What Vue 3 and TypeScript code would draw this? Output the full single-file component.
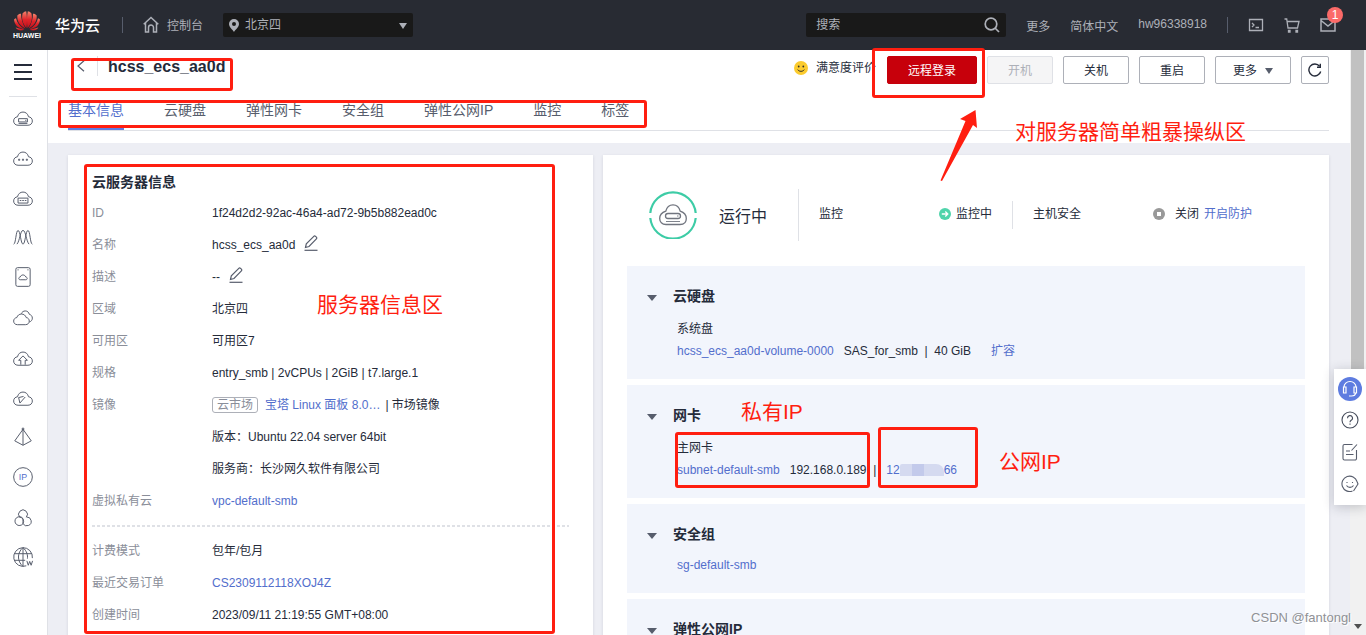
<script setup lang="ts">
interface NavItem {
  label: string
  paths: string[]
  text?: string
}

interface InfoRow {
  label: string
  value: string
  link?: boolean
  editable?: boolean
  market?: boolean
}

const cloud = 'M5.5 17.5C2.8 17.5 1.5 15.6 1.5 13.6C1.5 11.4 3 10 5 9.8C5.6 7 7.6 5.5 10 5.5C12.4 5.5 14.4 7 15 9.8C17 10 18.5 11.4 18.5 13.6C18.5 15.6 17.2 17.5 14.5 17.5Z'

const navItems: NavItem[] = [
  { label: '云耀服务器', paths: [cloud, 'M6 11.5h8v3H6zM12 13h1M6 15.8h8'] },
  { label: '云容器', paths: [cloud, 'M6 12h1v1H6zM9.5 12h1v1h-1zM13 12h1v1h-1z'] },
  { label: '云主机', paths: [cloud, 'M5.5 11h9v4.5h-9zM7 13.2h1.5M9.3 13.2h1.5M11.6 13.2h1.5'] },
  { label: '弹性伸缩', paths: ['M1.5 16.5C3.5 16.5 3.5 4 5.5 4S8 16.5 10 16.5S12.5 4 14.5 4S16.5 16.5 18.5 16.5', 'M4.5 16.5C7 14 7.5 4 10 4S13 14 15.5 16.5'] },
  { label: '镜像服务', paths: ['M5 1.5h10a1.5 1.5 0 0 1 1.5 1.5v14a1.5 1.5 0 0 1-1.5 1.5H5a1.5 1.5 0 0 1-1.5-1.5V3A1.5 1.5 0 0 1 5 1.5z', 'M7.5 12.5c-2 0-1.500-2.5 0-2.5c.7-2.5 4.3-2.5 5 0c1.5 0 2 2.5 0 2.5zM5 3.5h1M14 3.5h1'] },
  { label: '多云', paths: ['M5 17C2.6 17 1.5 15.4 1.5 13.7C1.5 12 2.7 10.7 4.4 10.5C5 8.5 6.6 7.3 8.6 7.3C10.7 7.3 12.3 8.5 12.9 10.5C14.6 10.7 15.7 12 15.7 13.7C15.7 15.4 14.5 17 12.2 17Z', 'M8.5 7C9 5.5 10.4 4.5 12 4.5C14 4.5 15.3 5.7 15.7 7.5C17.3 8 18.5 9.2 18.5 11C18.5 12.8 17.5 14 15.8 14.5'] },
  { label: '云备份', paths: [cloud, 'M8 17v-4H6l4-4l4 4h-2v4'] },
  { label: '云监控', paths: [cloud, 'M10.5 9.5L6 10.5M6 10.5L7.2 15.5L12 10'] },
  { label: '对象存储', paths: ['M10 3L2.5 13.5L10 17.5L17.5 13.5ZM10 3V17.5', 'M9.3 2h1.4v1.4H9.3z'] },
  { label: '弹性公网IP', paths: ['M10 1.5a8.5 8.5 0 1 0 0 17a8.5 8.5 0 1 0 0-17z'], text: 'IP' },
  { label: '资源组', paths: ['M7 10.2A4 4 0 1 1 13 10.2', 'M10 11.5A4 4 0 1 0 10 16A4 4 0 1 0 13.3 10M6.7 10A4 4 0 0 1 10 16M10 11.5V16'] },
  { label: '域名', paths: ['M13 18A8.500 8.500 0 1 1 18.5 11M10 1.5v17M2 7h16M2 13h10M10 1.5C4.5 6 4.5 14 10 18.5M10 1.5c3.5 3 4.5 7 4 10', 'M13.500 13.500l1.300 4l1.300-3.500l1.300 3.500l1.300-4'] },
]

const tabs: string[] = ['基本信息', '云硬盘', '弹性网卡', '安全组', '弹性公网IP', '监控', '标签']

const baseRows: InfoRow[] = [
  { label: 'ID', value: '1f24d2d2-92ac-46a4-ad72-9b5b882ead0c' },
  { label: '名称', value: 'hcss_ecs_aa0d', editable: true },
  { label: '描述', value: '--', editable: true },
  { label: '区域', value: '北京四' },
  { label: '可用区', value: '可用区7' },
  { label: '规格', value: 'entry_smb | 2vCPUs | 2GiB | t7.large.1' },
  { label: '镜像', value: '宝塔 Linux 面板 8.0…', market: true },
  { label: '', value: '版本：Ubuntu 22.04 server 64bit' },
  { label: '', value: '服务商：长沙网久软件有限公司' },
  { label: '虚拟私有云', value: 'vpc-default-smb', link: true },
]

const billingRows: InfoRow[] = [
  { label: '计费模式', value: '包年/包月' },
  { label: '最近交易订单', value: 'CS2309112118XOJ4Z', link: true },
  { label: '创建时间', value: '2023/09/11 21:19:55 GMT+08:00' },
]
</script>

<template>
  <div class="page">
    <header class="topbar">
      <a class="brand" href="#" aria-label="HUAWEI 华为云">
        <span class="logo">
          <svg width="28" height="20" viewBox="0 0 28 20" aria-hidden="true">
            <defs>
              <linearGradient id="petal" x1="0" y1="0" x2="0" y2="1">
                <stop offset="0" stop-color="#f4836c" />
                <stop offset="0.5" stop-color="#e0242a" />
                <stop offset="1" stop-color="#c4121c" />
              </linearGradient>
            </defs>
            <g fill="url(#petal)">
              <path d="M13.5 17C9 12 8.5 7 9.6 2.5C10.8 .9 12 .4 13.2 .3C14.2 5 14.3 11 13.5 17Z" />
              <path d="M14.5 17C19 12 19.5 7 18.4 2.5C17.2 .9 16 .4 14.8 .3C13.8 5 13.7 11 14.5 17Z" />
              <path d="M12.5 17.5C6.5 14.5 4 10 4.3 4.5C5.5 3.2 6.7 2.8 8 2.8C8 8 9.5 13 12.5 17.5Z" />
              <path d="M15.5 17.5C21.5 14.5 24 10 23.7 4.5C22.5 3.2 21.3 2.8 20 2.8C20 8 18.5 13 15.5 17.5Z" />
              <path d="M11.5 18C5 17.5 1.5 14 1 8.5C1.5 7.8 2.3 7.4 3 7.2C4 12 7 15.5 11.5 18Z" />
              <path d="M16.5 18C23 17.5 26.5 14 27 8.5C26.5 7.8 25.7 7.4 25 7.2C24 12 21 15.5 16.5 18Z" />
              <path d="M11.5 18.7C8 20.2 4.5 19.8 2.6 16.6C5.5 17.6 8.5 18.5 11.5 18.7Z" />
              <path d="M16.5 18.7C20 20.2 23.5 19.8 25.4 16.6C22.5 17.6 19.5 18.5 16.5 18.7Z" />
            </g>
          </svg>
          <span class="logo-text">HUAWEI</span>
        </span>
        <span class="brand-name">华为云</span>
      </a>
      <span class="bar-line"></span>
      <a class="console" href="#">
        <svg width="16" height="18" viewBox="0 0 16 18" fill="none" stroke="#adb0b8" stroke-width="1.5" aria-hidden="true">
          <path d="M.7 8.3L8 1.5l7.3 6.8M2.5 7v9h3v-4.500a2.5 2.5 0 0 1 5 0V16h3V7" />
        </svg>
        <span>控制台</span>
      </a>
      <div class="region">
        <svg class="pin" width="10" height="13" viewBox="0 0 10 13" aria-hidden="true">
          <path fill="#adb0b8" fill-rule="evenodd" d="M5 0a5 5 0 0 1 5 5c0 3-3.500 5.500-5 8C3.500 10.500 0 8 0 5a5 5 0 0 1 5-5zm0 3a2 2 0 1 0 0 4a2 2 0 1 0 0-4z" />
        </svg>
        <select aria-label="区域">
          <option>北京四</option>
        </select>
        <svg class="caret" width="8" height="6" viewBox="0 0 8 6" aria-hidden="true"><path fill="#adb0b8" d="M0 0h8L4 6z" /></svg>
      </div>
      <div class="search">
        <input type="text" placeholder="搜索" aria-label="搜索" />
        <svg width="16" height="16" viewBox="0 0 16 16" fill="none" stroke="#adb0b8" stroke-width="1.7" aria-hidden="true">
          <circle cx="7" cy="7" r="5.8" /><path d="M11 11l4 4" />
        </svg>
      </div>
      <nav class="links" aria-label="账号">
        <a href="#">更多</a>
        <a href="#">简体中文</a>
        <a href="#">hw96338918</a>
      </nav>
      <span class="bar-line"></span>
      <div class="tools">
        <button type="button" aria-label="终端">
          <svg width="16" height="16" viewBox="0 0 16 16" fill="none" stroke="#adb0b8" stroke-width="1.3" aria-hidden="true">
            <path d="M1.5 2.5h13v11h-13zM4 6l2 2l-2 2M7.5 10.5H11" />
          </svg>
        </button>
        <button type="button" aria-label="购物车">
          <svg width="16" height="16" viewBox="0 0 16 16" fill="none" stroke="#adb0b8" stroke-width="1.3" aria-hidden="true">
            <path d="M.5 2h2.200l1.300 9h9.500l1.500-6.500H3.500" /><path d="M4.500 13.500H6V15H4.500zM12 13.500h1.500V15H12z" />
          </svg>
        </button>
        <button type="button" aria-label="消息">
          <svg width="16" height="16" viewBox="0 0 16 16" fill="none" stroke="#adb0b8" stroke-width="1.5" aria-hidden="true">
            <path d="M1 2h14v12H1zM1 3.5L8 9l7-5.5" />
          </svg>
          <span class="badge">1</span>
        </button>
      </div>
    </header>

    <div class="body">
      <nav class="side" aria-label="服务列表">
        <button type="button" class="menu" aria-label="菜单">
          <svg width="18" height="16" viewBox="0 0 18 16" aria-hidden="true"><path fill="#252b3a" d="M0 0h18v2H0zM0 7h18v2H0zM0 14h18v2H0z" /></svg>
        </button>
        <a v-for="item in navItems" :key="item.label" href="#" :aria-label="item.label">
          <svg width="22" height="22" viewBox="0 0 20 20" fill="none" stroke="#575d6c" stroke-width="0.9" aria-hidden="true">
            <path v-for="(d, i) in item.paths" :key="i" :d="d" />
            <text v-if="item.text" x="10" y="13" class="nav-glyph">{{ item.text }}</text>
          </svg>
        </a>
      </nav>

      <main class="main">
        <section class="head">
          <div class="title-row">
            <a class="back" href="#" aria-label="返回">
              <svg width="8" height="12" viewBox="0 0 8 12" fill="none" stroke="#575d6c" stroke-width="1.2" aria-hidden="true"><path d="M7 .7L1 6l6 5.3" /></svg>
            </a>
            <h1>hcss_ecs_aa0d</h1>
            <a class="rate" href="#">
              <svg width="14" height="14" viewBox="0 0 14 14" aria-hidden="true">
                <circle cx="7" cy="7" r="7" fill="#fbcb2e" />
                <ellipse cx="4.7" cy="5.5" rx="0.9" ry="1.1" fill="#33302a" /><ellipse cx="9.3" cy="5.5" rx="0.9" ry="1.1" fill="#33302a" />
                <path d="M3.7 8.6c1.4 2.3 5.200 2.3 6.600 0" fill="none" stroke="#33302a" stroke-width="1" />
              </svg>
              <span>满意度评价</span>
            </a>
            <div class="actions">
              <button type="button" class="btn primary">远程登录</button>
              <button type="button" class="btn" disabled>开机</button>
              <button type="button" class="btn">关机</button>
              <button type="button" class="btn">重启</button>
              <button type="button" class="btn more">
                更多
                <svg width="8" height="6" viewBox="0 0 8 6" aria-hidden="true"><path fill="#575d6c" d="M0 0h8L4 6z" /></svg>
              </button>
              <button type="button" class="btn icon" aria-label="刷新">
                <svg width="14" height="14" viewBox="0 0 14 14" fill="none" stroke="#252b3a" stroke-width="1.4" aria-hidden="true">
                  <path d="M12.7 8.5A6 6 0 1 1 11.6 3.2" /><path d="M12.3 .8v3.400H9" />
                </svg>
              </button>
            </div>
          </div>
          <nav class="tabs" aria-label="详情">
            <a v-for="(tab, i) in tabs" :key="tab" href="#" :class="{ active: i === 0 }">{{ tab }}</a>
          </nav>
        </section>

        <div class="cards">
          <section class="card info">
            <h2>云服务器信息</h2>
            <dl>
              <div v-for="(row, i) in baseRows" :key="i" class="row">
                <dt>{{ row.label }}</dt>
                <dd>
                  <template v-if="row.market">
                    <span class="tag">云市场</span>
                    <a href="#">{{ row.value }}</a>
                    <span class="after">| 市场镜像</span>
                  </template>
                  <a v-else-if="row.link" href="#">{{ row.value }}</a>
                  <template v-else>{{ row.value }}</template>
                  <button v-if="row.editable" type="button" class="edit" aria-label="编辑">
                    <svg width="16" height="16" viewBox="0 0 16 16" fill="none" stroke="#575d6c" stroke-width="1.2" aria-hidden="true">
                      <path d="M1.5 15.3h13" /><path d="M2.5 12.5l.8-3.600L10.8 1.3a1.2 1.2 0 0 1 1.7 0l.9.9a1.2 1.2 0 0 1 0 1.7L6 11.5z" />
                    </svg>
                  </button>
                </dd>
              </div>
            </dl>
            <hr />
            <dl>
              <div v-for="row in billingRows" :key="row.label" class="row">
                <dt>{{ row.label }}</dt>
                <dd>
                  <a v-if="row.link" href="#">{{ row.value }}</a>
                  <template v-else>{{ row.value }}</template>
                </dd>
              </div>
            </dl>
          </section>

          <section class="card state">
            <div class="status">
              <svg width="48" height="48" viewBox="0 0 48 48" fill="none" aria-hidden="true">
                <path d="M1.3 22A22.8 22.8 0 0 1 46.7 22M1.3 27A22.8 22.8 0 0 0 46.7 27" stroke="#3dcca6" stroke-width="2.2" />
                <g stroke="#71757f" stroke-width="1.3">
                  <path d="M17 33.5C13 33.5 10.7 31 10.7 27.5C10.7 24 13 21.5 16.8 20.2C17.8 16 20.5 13.8 24 13.8C27.5 13.8 30.2 16 31.2 20.2C35 21.5 37.3 24 37.3 27.5C37.3 31 35 33.5 31 33.5Z" />
                  <rect x="16.5" y="22.5" width="15" height="5" rx="2.5" /><path d="M28 25h1.5M17 30.5h14" stroke-width="0.9" />
                </g>
              </svg>
              <strong class="running">运行中</strong>
              <div class="cell tall">
                <span>监控</span>
                <span class="flag">
                  <svg width="12" height="12" viewBox="0 0 12 12" aria-hidden="true"><circle cx="6" cy="6" r="6" fill="#50d4ab" /><path d="M2.8 6h6M6.3 3.5L8.8 6L6.3 8.5" fill="none" stroke="#fff" stroke-width="1.3" /></svg>
                  监控中
                </span>
              </div>
              <div class="cell">
                <span>主机安全</span>
                <span class="flag wide">
                  <svg width="12" height="12" viewBox="0 0 12 12" aria-hidden="true"><circle cx="6" cy="6" r="6" fill="#999" /><rect x="4" y="4" width="4" height="4" fill="#fff" /></svg>
                  关闭 <a href="#">开启防护</a>
                </span>
              </div>
            </div>

            <section class="block">
              <h3>云硬盘</h3>
              <p>系统盘</p>
              <p class="items"><a href="#">hcss_ecs_aa0d-volume-0000</a><span>SAS_for_smb&nbsp; |&nbsp; 40 GiB</span><a class="expand" href="#">扩容</a></p>
            </section>
            <section class="block">
              <h3>网卡</h3>
              <p>主网卡</p>
              <p class="items"><a href="#">subnet-default-smb</a><span>192.168.0.189&nbsp; |</span><a class="public" href="#">12<i class="mask"></i>66</a></p>
            </section>
            <section class="block compact">
              <h3>安全组</h3>
              <p><a href="#">sg-default-smb</a></p>
            </section>
            <section class="block">
              <h3>弹性公网IP</h3>
              <p>&nbsp;</p>
            </section>
          </section>
        </div>
      </main>

      <div class="scroll">
        <span class="thumb"></span>
        <svg width="8" height="5" viewBox="0 0 8 5" aria-hidden="true"><path fill="#505050" d="M0 0h8L4 5z" /></svg>
      </div>
    </div>

    <aside class="dock">
      <button type="button" class="service" aria-label="客服">
        <svg width="24" height="24" viewBox="0 0 24 24" fill="none" stroke="#fff" stroke-width="1.2" aria-hidden="true">
          <path d="M6 10a6 5.5 0 0 1 12 0M5.500 10H8v6H5.500zM16 10h2.500v6H16zM17.500 16c0 2-2 3-4 3h-2.500" />
        </svg>
      </button>
      <button type="button" aria-label="帮助">
        <svg width="18" height="18" viewBox="0 0 18 18" fill="none" stroke="#464c5b" stroke-width="1.1" aria-hidden="true">
          <circle cx="9" cy="9" r="8" /><path d="M6.5 7.2a2.5 2.5 0 1 1 3.7 2.1c-.9.5-1.200 1-1.200 2M9 12.5v1.3" />
        </svg>
      </button>
      <button type="button" aria-label="反馈">
        <svg width="18" height="18" viewBox="0 0 18 18" fill="none" stroke="#575d6c" stroke-width="1.1" aria-hidden="true">
          <path d="M11.5 1.5h-8a1.500 1.500 0 0 0-1.500 1.500v12.500a1.500 1.500 0 0 0 1.500 1.500h10.500a1.500 1.500 0 0 0 1.500-1.500V7M16 1.5L10.500 7.5M5 8h4M5 11.5h7.500" />
        </svg>
      </button>
      <button type="button" aria-label="评价">
        <svg width="18" height="18" viewBox="0 0 18 18" fill="none" stroke="#575d6c" stroke-width="1.1" aria-hidden="true">
          <path d="M11.5 16A7.7 7.7 0 1 1 16 6.5M16 6.5l1 2.5L12.5 16M5.5 10.5c1.5 2.5 5.5 2.5 7 0M6 7v1M11.5 7v1" />
        </svg>
      </button>
    </aside>

    <div class="notes">
      <span class="box box-title"></span>
      <span class="box box-tabs"></span>
      <span class="box box-login"></span>
      <span class="box box-info"></span>
      <span class="box box-private"></span>
      <span class="box box-public"></span>
      <svg class="arrow" width="38" height="72" viewBox="0 0 38 72" aria-hidden="true">
        <path fill="#ff1e10" d="M35.5 0L37 18L33 15L2 71L.5 70.5L25.500 11L20 9Z" />
      </svg>
      <span class="note note-ops">对服务器简单粗暴操纵区</span>
      <span class="note note-info">服务器信息区</span>
      <span class="note note-private">私有IP</span>
      <span class="note note-public">公网IP</span>
    </div>
    <span class="watermark">CSDN @fantongl</span>
  </div>
</template>

<style>
body {
  margin: 0;
  overflow: hidden;
}
</style>

<style scoped>
.page {
  position: relative;
  display: flex;
  flex-direction: column;
  height: 100vh;
  overflow: hidden;
  font-family: "Liberation Sans", "Noto Sans CJK SC", sans-serif;
  font-size: 12px;
  color: #252b3a;
  background: #edeef4;
}
a {
  color: #526ecc;
  text-decoration: none;
}
button,
input,
select {
  font: inherit;
}
svg {
  flex: none;
  display: block;
}
h1,
h2,
h3,
p,
dl,
dd {
  margin: 0;
}

.topbar {
  flex: none;
  display: flex;
  align-items: center;
  height: 50px;
  color: #adb0b8;
  background: #282b33;
}
.topbar a {
  color: #adb0b8;
}
.brand {
  display: flex;
  align-items: center;
  gap: 14px;
  margin-left: 13px;
}
.logo {
  display: flex;
  flex-direction: column;
  align-items: center;
  width: 28px;
}
.logo-text {
  font-size: 7px;
  line-height: 9px;
  font-weight: bold;
  color: #fff;
}
.brand-name {
  padding-bottom: 2px;
  font-size: 15px;
  font-weight: 500;
  color: #fff !important;
}
.bar-line {
  width: 1px;
  height: 16px;
  background: #575d6c;
}
.brand + .bar-line {
  margin: 0 20px 0 22px;
}
.console {
  display: flex;
  align-items: center;
  gap: 8px;
  margin-right: 20px;
}
.console span {
  padding-bottom: 2px;
}
.region {
  position: relative;
  width: 190px;
}
.region select {
  display: block;
  appearance: none;
  width: 100%;
  height: 24px;
  padding: 0 22px;
  border: 0;
  border-radius: 2px;
  color: #adb0b8;
  background: #191919;
}
.pin,
.caret {
  position: absolute;
  pointer-events: none;
}
.pin {
  left: 6px;
  top: 6px;
}
.caret {
  right: 6px;
  top: 10px;
}
.search {
  display: flex;
  align-items: center;
  box-sizing: border-box;
  width: 200px;
  height: 24px;
  margin-left: auto;
  padding: 0 6px 0 10px;
  border-radius: 2px;
  background: #191919;
}
.search input {
  flex: 1;
  min-width: 0;
  padding: 0;
  border: 0;
  outline: 0;
  color: #adb0b8;
  background: none;
}
.search input::placeholder {
  color: #adb0b8;
}
.links {
  display: flex;
  gap: 20px;
  margin: 0 20px;
}
.tools {
  display: flex;
  gap: 20px;
  margin: 0 30px 0 20px;
}
.tools button {
  position: relative;
  padding: 0;
  border: 0;
  background: none;
}
.badge {
  position: absolute;
  right: -7px;
  top: -10px;
  width: 16px;
  height: 16px;
  border-radius: 8px;
  line-height: 16px;
  text-align: center;
  color: #fff;
  background: #fb6a68;
}

.body {
  flex: 1;
  display: flex;
  min-height: 0;
}
.side {
  flex: none;
  display: flex;
  flex-direction: column;
  align-items: center;
  box-sizing: border-box;
  width: 48px;
  padding-right: 1px;
  border-right: 1px solid #dfe1e6;
  background: #fff;
}
.menu {
  width: 28px;
  height: 47px;
  padding: 0;
  border: 0;
  border-bottom: 1px solid #dfe1e6;
  background: none;
}
.menu svg {
  margin: -2px auto 0;
}
.side a {
  display: flex;
  align-items: center;
  height: 40px;
}
.nav-glyph {
  font-size: 8px;
  text-anchor: middle;
  fill: #526ecc;
  stroke: none;
}
.main {
  flex: 1;
  min-width: 0;
  overflow: hidden;
}
.head {
  padding: 6px 21px 12px 20px;
  background: #fff;
}
.title-row {
  display: flex;
  align-items: flex-start;
}
.back {
  height: 16px;
  padding: 4px 12px 0 9px;
  border-right: 1px solid #dfe1e6;
}
h1 {
  padding-left: 10px;
  font-size: 16px;
  line-height: 22px;
}
.rate {
  display: flex;
  align-items: center;
  gap: 8px;
  margin-left: auto;
  margin-right: 11px;
  line-height: 24px;
  color: #252b3a;
}
.actions {
  display: flex;
  gap: 10px;
}
.btn {
  box-sizing: border-box;
  min-width: 66px;
  height: 28px;
  padding: 0 0 2px;
  border: 1px solid #adb0b8;
  border-radius: 2px;
  color: #252b3a;
  background: #fff;
}
.btn.primary {
  min-width: 90px;
  border-color: #c7000b;
  color: #fff;
  background: #c7000b;
}
.btn:disabled {
  border-color: #dfe1e6;
  color: #adb0b8;
  background: #f5f5f6;
}
.btn.more {
  display: flex;
  align-items: center;
  justify-content: center;
  gap: 8px;
  min-width: 76px;
}
.btn.more svg {
  margin-top: 4px;
}
.btn.icon {
  display: flex;
  align-items: center;
  justify-content: center;
  min-width: 28px;
  padding: 0;
}
.tabs {
  display: flex;
  gap: 40px;
  margin-top: 12px;
  border-bottom: 1px solid #dfe1e6;
  font-size: 14px;
  line-height: 28px;
}
.tabs a {
  padding-bottom: 4px;
  border-bottom: 2px solid transparent;
  color: #575d6c;
}
.tabs .active {
  border-color: #5e7ce0;
  color: #526ecc;
}

.cards {
  display: grid;
  grid-template-columns: 525fr 726fr;
  gap: 10px;
  padding: 12px 21px 0 20px;
}
.card {
  min-width: 0;
  padding: 0 24px 24px;
  background: #fff;
  box-shadow: 0 1px 3px rgba(37, 43, 58, 0.12);
}
.info {
  padding-top: 12px;
}
h2,
h3 {
  font-size: 14px;
}
h2 {
  line-height: 30px;
}
.row {
  display: flex;
  height: 32px;
  line-height: 32px;
}
dt {
  flex: none;
  width: 120px;
  color: #8a8e99;
}
dd {
  display: flex;
  align-items: center;
  white-space: nowrap;
}
.edit {
  margin-left: 8px;
  padding: 0 0 4px;
  border: 0;
  background: none;
}
.tag {
  margin-right: 7px;
  padding: 0 4px;
  border: 1px solid #adb0b8;
  border-radius: 3px;
  line-height: 14px;
  color: #8a8e99;
}
.after {
  margin-left: 5px;
}
hr {
  height: 2px;
  margin: 8px 0;
  border: 0;
  background: repeating-linear-gradient(90deg, #dfe1e6 0, #dfe1e6 3px, transparent 3px, transparent 5px);
}
.status {
  display: flex;
  align-items: center;
  height: 111px;
  padding: 0 22px;
}
.status > svg {
  margin-top: 9px;
}
.running {
  margin: 8px 31px 0 22px;
  font-size: 16px;
  font-weight: normal;
  white-space: nowrap;
}
.cell {
  display: flex;
  align-items: center;
  box-sizing: border-box;
  flex: 1;
  height: 28px;
  margin-top: 8px;
  padding: 0 0 2px 20px;
  border-left: 1px solid #dfe1e6;
  line-height: 18px;
  white-space: nowrap;
}
.cell.tall {
  flex: none;
  justify-content: space-between;
  width: 214px;
  height: 52px;
  padding-right: 20px;
}
.flag {
  display: flex;
  align-items: center;
  gap: 5px;
}
.flag.wide {
  margin-left: 72px;
}
.flag.wide svg {
  margin-right: 5px;
}
.block {
  margin-bottom: 6px;
  padding: 20px 24px 17px 50px;
  background: #f2f5fc;
}
h3 {
  position: relative;
  margin: 0 0 12px -4px;
  line-height: 20px;
}
h3::before {
  content: "";
  position: absolute;
  left: -26px;
  top: 9px;
  border: 5px solid transparent;
  border-top: 6px solid #575d6c;
  border-bottom: 0;
}
.block p {
  line-height: 22px;
  white-space: nowrap;
}
.compact h3 {
  margin-bottom: 10px;
}
.items {
  display: flex;
  gap: 10px;
}
.expand {
  margin-left: 10px;
}
.public {
  display: flex;
  align-items: center;
}
.mask {
  width: 44px;
  height: 12px;
  border-radius: 2px 8px 0 0;
  background: linear-gradient(90deg, #d5daf0 12px, #c3caeb 12px, #c3caeb 24px, #d5daf0 24px);
}

.scroll {
  flex: none;
  display: flex;
  flex-direction: column;
  align-items: center;
  justify-content: space-between;
  box-sizing: border-box;
  width: 16px;
  padding: 0 1px 6px 0;
  background: #f1f1f1;
}
.thumb {
  width: 13px;
  height: 70%;
  background: #c1c1c1;
}
.dock {
  position: absolute;
  right: 0;
  top: 369px;
  display: flex;
  flex-direction: column;
  align-items: center;
  gap: 14px;
  box-sizing: border-box;
  width: 32px;
  padding: 8px 0 12px;
  background: #fff;
  box-shadow: 0 2px 12px rgba(37, 43, 58, 0.24);
}
.dock button {
  padding: 0;
  border: 0;
  background: none;
}
.dock .service {
  margin-bottom: -4px;
  border-radius: 12px;
  background: #5e7ce0;
}

.notes {
  position: absolute;
  inset: 0;
  pointer-events: none;
}
.box,
.note,
.arrow {
  position: absolute;
}
.box {
  box-sizing: border-box;
  border: 3px solid #ff1e10;
  border-radius: 3px;
}
.box-title {
  left: 71px;
  top: 58px;
  width: 162px;
  height: 33px;
}
.box-tabs {
  left: 58px;
  top: 100px;
  width: 589px;
  height: 28px;
}
.box-login {
  left: 872px;
  top: 48px;
  width: 113px;
  height: 50px;
}
.box-info {
  left: 84px;
  top: 164px;
  width: 471px;
  height: 470px;
}
.box-private {
  left: 675px;
  top: 432px;
  width: 195px;
  height: 56px;
}
.box-public {
  left: 878px;
  top: 427px;
  width: 100px;
  height: 61px;
}
.arrow {
  left: 940px;
  top: 110px;
}
.note {
  font-size: 21px;
  line-height: 28px;
  color: #ff1e10;
  white-space: nowrap;
}
.note-ops {
  left: 1015px;
  top: 118px;
}
.note-info {
  left: 317px;
  top: 291px;
}
.note-private {
  left: 741px;
  top: 398px;
}
.note-public {
  left: 999px;
  top: 448px;
}
.watermark {
  position: absolute;
  right: 15px;
  bottom: 7px;
  font-size: 13px;
  line-height: 20px;
  color: #8f9196;
  text-shadow: 1px 1px 0 #fff;
}
</style>
